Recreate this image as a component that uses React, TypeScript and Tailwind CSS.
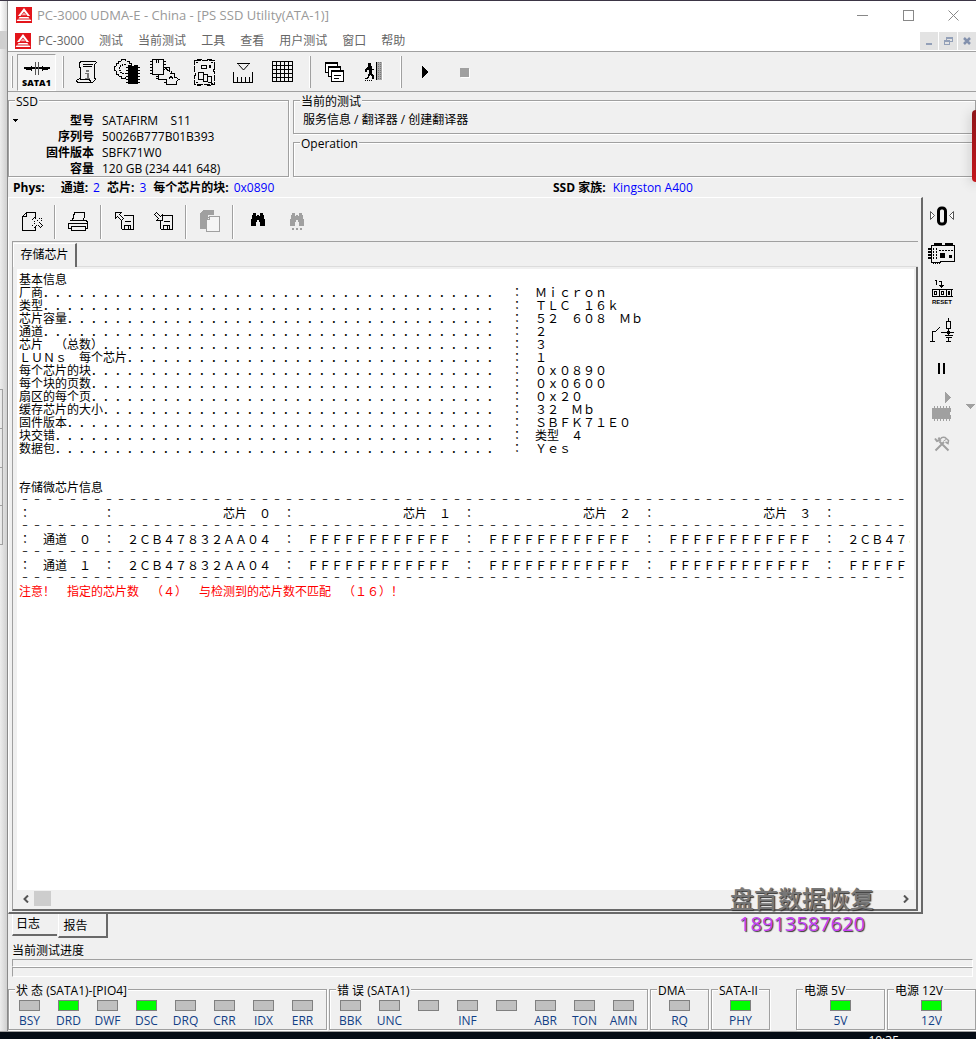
import type { ReactNode } from "react";

const UI_FONT = "font-['Open_Sans','Noto_Sans_CJK_SC',sans-serif]";

function Pix({ w, h, children, color = "#000" }: { w: number; h: number; children: ReactNode; color?: string }) {
  return (
    <svg width={w} height={h} viewBox={`0 0 ${w} ${h}`} fill="none" stroke={color} strokeWidth="1" shapeRendering="crispEdges" aria-hidden="true" className="shrink-0">
      {children}
    </svg>
  );
}

function Logo() {
  return (
    <svg width="16" height="16" viewBox="0 0 16 16" aria-hidden="true" className="shrink-0">
      <rect width="16" height="16" fill="#e3151b" />
      <path d="M8 1 14 9h-2.400L8 4.400 4.400 9H2z" fill="#fff" />
      <path d="M5.500 8.200 8 5.800l2.500 2.400z" fill="#f6b5b6" />
      <path d="M3.600 10h8.800l1.200 1.400H2.400zM1.600 12.400h12.800l1 1.600H.6z" fill="#fff" />
    </svg>
  );
}

const SataIcon = () => (
  <Pix w={28} h={13}>
    <path d="M1 6h26" strokeWidth="2" />
    <path d="M12.500 0v13M15.500 0v13" stroke="#555" />
    <path d="M3 5h5v3H3zM20 5h5v3h-5zM8 4h1v5H8zM19 4h1v5h-1z" fill="#000" stroke="none" />
  </Pix>
);

const ScrollIcon = () => (
  <Pix w={23} h={24}>
    <path d="M4.500 1.500h15l1 1-2 2v13l1 2-3 3H1.500l-1-2 1-1 3-1v-10l-1-2v-3zM4 19.500h9l2 2" />
    <path d="M7 4.500h10M7 6.500h9" />
    <path d="M10 10h3v2h-3zM9 13h4v5h1v1H9v-1h2v-4H9z" fill="#777" stroke="none" />
  </Pix>
);

const GearChipIcon = () => (
  <Pix w={28} h={28}>
    <path d="M14 3.500h2v2h2v3M12.500 3V1.500h-4V3M8 3.500H6M5.500 3v2h-2v3M3 8.500H1.500v4H3M3.500 13v3h2v2M6 18.500h2.500v2h4v-2" />
    <path d="M13 6.500H9.500v1h-2v2h-1v3h1v2h2v1H13" strokeDasharray="2 1" />
    <path d="M15 7h3v1h3V7h4v19H15z" fill="#000" stroke="none" />
    <path d="M13 9.500h2M13 12.500h2M13 15.500h2M13 18.500h2M13 21.500h2M13 24.500h2M25 9.500h2M25 12.500h2M25 15.500h2M25 18.500h2M25 21.500h2M25 24.500h2" />
  </Pix>
);

const ChipsIcon = () => (
  <Pix w={31} h={28}>
    <path d="M2.500 1.500h11v15h-11zM6.500 2v3M8.500 2v3" />
    <path d="M0 3.500h2M0 6.500h2M0 9.500h2M0 12.500h2M0 15.500h2M14 3.500h2M14 6.500h2" />
    <path d="M14 9.500h5v3M21.500 13v2M8.500 17v4.500h8M14 11.500l2-1 2 2 2 1" />
    <path d="M20 15.500h4v4M16.500 22v4.500h10v-4M24 19.500h2l3 2-3 2M6 18.500h2M6 20.500h2M14 24.500h2M19 20.500l2-2 2 2" />
  </Pix>
);

const BoardIcon = () => (
  <Pix w={24} h={29}>
    <path d="M1.500 2.500h20v8l-1 2 1 2v12h-20v-8l1-2-1-2z" strokeDasharray="6 1" />
    <path d="M4 1.500h5M14 1.500h5M4 27.500h4M14 27.500h4M8.500 7.500h5v3h-5zM16.500 7.500h1v2h-1zM5.500 14.500h5v7h-5zM10.500 16.500h4v7h-4v-2M14.500 18.500h4v6h-4" />
    <path d="M3 4.500h2M18 4.500h2M3 24.500h2M18 25.500h2" />
  </Pix>
);

const RulerIcon = () => (
  <Pix w={21} h={21}>
    <path d="M4 1.500h13M5.500 2.500l5 5.500 5-5.500" shapeRendering="auto" />
    <path d="M.5 10v10.500h19V10M4.500 15v5M8.500 15v5M12.500 15v5M16.500 15v5" />
  </Pix>
);

const GridIcon = () => (
  <Pix w={22} h={22}>
    <path d="M.5.5h20v20H.5zM4.500 0v21M8.500 0v21M12.500 0v21M16.500 0v21M0 4.500h21M0 8.500h21M0 12.500h21M0 16.500h21" />
  </Pix>
);

const CascadeIcon = () => (
  <Pix w={20} h={21}>
    <path d="M.5.5h12v10H.500z" fill="#fff" />
    <path d="M0 1h13" strokeWidth="2" />
    <path d="M3.500 4.500h12v10h-12z" fill="#fff" />
    <path d="M3 5h13" strokeWidth="2" />
    <path d="M6.500 8.500h12v11h-12z" fill="#fff" />
    <path d="M6 9h13" strokeWidth="2" />
    <path d="M9 13.500h7M9 16.500h5" />
  </Pix>
);

const ExitIcon = () => (
  <Pix w={20} h={20}>
    <path d="M4 1h3v3h1v3h2v1H8v3l2 3v3H8v-2l-2-2-2 4H1v-1h2l2-5V8H3v2H1V8l3-4z" fill="#000" stroke="none" />
    <path d="M1 18.500h8" strokeDasharray="1 1" />
    <path d="M12.500 0v18" />
    <path d="M13 0h5v18h-5z" fill="#a9a9a9" stroke="none" />
    <path d="M14.500 0v18M16.500 0v18" strokeDasharray="1 1" stroke="#777" />
    <path d="M18.500 0v18" stroke="#fff" />
  </Pix>
);

const CloseDocIcon = () => (
  <Pix w={22} h={20}>
    <path d="M13.500 14v4.500H.5v-14l4-4h9V6M4.500 1v3.500H1" />
    <path d="M12.500 5.500l3 3 3-3 2 2-3 3 3 3-2 2-3-3-3 3-2-2 3-3-3-3z" strokeDasharray="2 1" />
  </Pix>
);

const PrintIcon = () => (
  <Pix w={21} h={20}>
    <path d="M4.500 8.500l2-8h10v3l-1 5M1.500 8.500h17l1 2v6h-3M.5 10.500v6h3M1 11.500h18M3.500 14.500h14v4h-14z" />
  </Pix>
);

const Floppy = () => (
  <>
    <path d="M9 3.500h9.500v14h-11l-1-1V9M10 9.500h6M9.500 17v-3.500h6V17" />
    <path d="M13 14h1v3h-1z" fill="#000" stroke="none" />
  </>
);
const LoadIcon = () => (
  <Pix w={20} h={19}>
    <Floppy />
    <path d="M.5.5h6l-2 2 4 4-2 2-4-4-2 2z" fill="#f0f0f0" />
  </Pix>
);
const SaveIcon = () => (
  <Pix w={20} h={19}>
    <Floppy />
    <path d="M2.500.5l4 4 2-2v6h-6l2-2-4-4z" fill="#f0f0f0" />
  </Pix>
);

const CopyIcon = () => (
  <Pix w={22} h={23}>
    <path d="M3 0h11v5H8v14H0V3z" fill="#a0a0a0" stroke="none" />
    <path d="M9.500 6.500h10v15h-13v-12zM9.500 7v2.500H7" stroke="#a0a0a0" fill="#f5f5f5" />
  </Pix>
);

const Bino = ({ color, dots }: { color: string; dots?: boolean }) => (
  <Pix w={16} h={18} color={color}>
    <path d="M3 0h3v3h1V2h2v1h1V0h3v2h1v3l1 2v6h-5V9H9V7H7v2H6v4H1V7l1-2V2h1z" fill={color} stroke="none" />
    {dots && <path d="M3 15h2v2H3zM7 15h2v2H7zM11 15h2v2h-2z" fill={color} stroke="none" />}
  </Pix>
);

const ZeroIcon = () => (
  <svg width="26" height="20" viewBox="0 0 26 20" aria-hidden="true">
    <path d="M1.500 5.500v8l4-4zM24.500 5.500v8l-4-4z" fill="#fff" stroke="#555" />
    <rect x="9.500" y="2" width="7" height="16" rx="3" fill="#f0f0f0" stroke="#000" strokeWidth="3" />
  </svg>
);

const CardIcon = () => (
  <Pix w={28} h={22}>
    <path d="M3.500 2.500h23v16h-14v1h-9z" />
    <path d="M6 0h8v3H6zM17 0h8v3h-8zM0 5h3v2H0zM0 8h3v2H0zM0 11h3v2H0zM0 14h3v2H0zM12 10h5v5h-5zM21 12h3v3h-3z" fill="#000" stroke="none" />
    <path d="M11 7.500h14M5 5v12M8.500 5v12" strokeDasharray="2 1" />
    <path d="M5 19.500h8" strokeDasharray="1 1" strokeWidth="2" />
  </Pix>
);

const CounterIcon = () => (
  <Pix w={21} h={19}>
    <path d="M3 1.500h1.500V6M7 2.500h2.500v5M7.500 6l2 2 2-2M.5 10.500h20M.5 17.500h20M.5 10v8M7.500 10v8M14.500 10v8M19.500 10v8" />
    <path d="M2.500 12.500h2v3h-2zM9.500 12.500h2v3h-2zM16.500 12.500h1v3h-1z" />
  </Pix>
);

const CircuitIcon = () => (
  <Pix w={24} h={25}>
    <path d="M0 23.500h5M2.500 23v-9.500h3l4-4M11 14.500h13M18.500 0v3M16.500 3.500h4v7h-4zM18.500 11v6M15 17.500h8M16 19.500h6M18.500 20v4M16 23.500h5" />
    <path d="M17 13h3v3h-3z" fill="#000" stroke="none" />
  </Pix>
);

const ChipPlayIcon = () => (
  <Pix w={20} h={31} color="#a0a0a0">
    <path d="M13 1l6 5.500-6 5.500z" fill="#a0a0a0" stroke="none" />
    <path d="M0 17h19v4h-1v3h1v4H0z" fill="#a0a0a0" stroke="none" />
    <path d="M2.500 15v15M5.500 15v15M8.500 15v15M11.500 15v15M14.500 15v15M17.500 15v15" />
  </Pix>
);

const ToolsIcon = () => (
  <svg width="16" height="16" viewBox="0 0 16 16" fill="none" stroke="#a0a0a0" strokeWidth="2" aria-hidden="true">
    <path d="M1.500 14.500 10 6M14.500 14.500 5.500 5.500M1 2.500l2 2.500 3-1L4.500 1.500" />
    <path d="M6.500 3C7.500 1 9 1 11 1.500l3.500 3-.5 3-2.500-1.500" strokeWidth="1.500" />
    <path d="M9.500 5 12 3.500" strokeWidth="1" />
  </svg>
);

function Sep({ className = "" }: { className?: string }) {
  return (
    <div className={`flex self-stretch justify-end py-[3px] pr-1 ${className}`}>
      <div className="w-[2px] border-l border-r border-l-white border-r-[#a0a0a0]" />
    </div>
  );
}

function ToolSep({ className = "w-[7px]" }: { className?: string }) {
  return (
    <div className={`flex h-[34px] pl-[2px] ${className}`}>
      <div className="w-[2px] border-l border-r border-l-[#a0a0a0] border-r-white" />
    </div>
  );
}

function Tool({ label, children, className = "h-[36px] w-[39px]", disabled }: { label: string; children: ReactNode; className?: string; disabled?: boolean }) {
  return (
    <button type="button" aria-label={label} disabled={disabled} className={`flex shrink-0 items-center justify-center ${className}`}>
      {children}
    </button>
  );
}

function Group({ title, children, className = "" }: { title: string; children?: ReactNode; className?: string }) {
  return (
    <fieldset className={`min-w-0 border border-[#a0a0a0] shadow-[1px_1px_0_#fff,inset_1px_1px_0_#fff] ${className}`}>
      <legend className="ml-[6px] h-[14px] bg-[#f0f0f0] px-px leading-[18px] whitespace-nowrap">{title}</legend>
      {children}
    </fieldset>
  );
}

function Led({ label, on }: { label: string; on?: boolean }) {
  return (
    <div className="flex w-[39px] flex-col items-center">
      <span className={`h-[11px] w-[21px] border border-[#808080] ${on ? "bg-[#00ff00]" : "bg-[#c0c0c0]"}`} />
      <span className="h-[20px] leading-[20px] text-[#123f86]">{label}</span>
    </div>
  );
}

const full = (s: string) =>
  s.replace(/[!-~]/g, (c) => String.fromCharCode(c.charCodeAt(0) + 0xfee0)).replace(/ /g, "\u3000");

const params: [string, string][] = [
  ["厂商", "Micron"],
  ["类型", "TLC 16k"],
  ["芯片容量", "52 608 Mb"],
  ["通道", "2"],
  ["芯片 （总数）", "3"],
  ["LUNs 每个芯片", "1"],
  ["每个芯片的块", "0x0890"],
  ["每个块的页数", "0x0600"],
  ["扇区的每个页", "0x20"],
  ["缓存芯片的大小", "32 Mb"],
  ["固件版本", "SBFK71E0"],
  ["块交错", "类型 4"],
  ["数据包", "Yes"],
];

const rule = "– ".repeat(75);
const F = "FFFFFFFFFFFF";
const ID = "2CB47832AA04";
const reportLines = [
  "基本信息",
  ...params.map(([k, v]) => k.padEnd(40, ".") + " : " + v),
  "",
  "",
  "存储微芯片信息",
  rule,
  ":      :" + [0, 1, 2, 3].map((n) => `         芯片 ${n} :`).join(""),
  rule,
  `: 通道 0 : ${ID} : ${F} : ${F} : ${F} : ${ID}`,
  rule,
  `: 通道 1 : ${ID} : ${F} : ${F} : ${F} : ${F}`,
  rule,
];

/* Colons sit in the middle of their cell; rules use a dash and a space that together fill one 12px cell. */
function ReportLine({ text }: { text: string }) {
  if (text === rule) {
    return <div className="h-[13px] pl-[3px] font-['Liberation_Mono',monospace] text-[10px] leading-[13px]">{text}</div>;
  }
  return (
    <div className="h-[13px]">
      {text.split(/(:)/).map((part, i) =>
        part === ":" ? <span key={i} className="font-['Noto_Sans_CJK_TC',monospace]">：</span> : full(part),
      )}
    </div>
  );
}

const menu = ["测试", "当前测试", "工具", "查看", "用户测试", "窗口", "帮助"];
const info = [
  ["型号", "SATAFIRM\u00a0\u00a0\u00a0 S11"],
  ["序列号", "50026B777B01B393"],
  ["固件版本", "SBFK71W0"],
  ["容量", "120 GB (234 441 648)"],
];
const statusLeds: [string, boolean][] = [
  ["BSY", false], ["DRD", true], ["DWF", false], ["DSC", true],
  ["DRQ", false], ["CRR", false], ["IDX", false], ["ERR", false],
];
const errorLeds = ["BBK", "UNC", "", "INF", "", "ABR", "TON", "AMN"];

export default function App() {
  return (
    <div className={`flex min-h-screen flex-col overflow-hidden bg-[#f0f0f0] text-[12px] leading-[16px] text-black ${UI_FONT}`}>
      <div className="h-px bg-[#3b3545]" />
      <div className="flex flex-1">
        <div className="flex w-2 shrink-0 flex-col border-r border-[#8a8a8a] bg-linear-to-r from-[#ededed] to-[#d0d0d0]">
          <div className="h-[30px] bg-linear-to-r from-white to-[#dcdcdc]" />
          <div className="h-[18px] bg-[#cfcfcf]" />
          <div className="mt-[340px] flex h-[156px] w-[3px] flex-col border-y border-r border-[#a0a0a0]">
            <div className="flex-1 border-b border-[#a0a0a0]" />
            <div className="flex-1 border-b border-[#a0a0a0]" />
            <div className="flex-1 border-b border-[#a0a0a0]" />
            <div className="flex-1" />
          </div>
        </div>

        <div className="flex min-w-0 flex-1 flex-col">
          <header className="flex h-[30px] items-center bg-white pb-[2px] pl-2">
            <Logo />
            <h1 className="ml-[5px] flex-1 text-[13px] font-normal text-[#999]">PC-3000 UDMA-E - China - [PS SSD Utility(ATA-1)]</h1>
            <Tool label="最小化" className="h-[28px] w-[46px]"><Pix w={11} h={11} color="#888"><path d="M0 5.500h11" /></Pix></Tool>
            <Tool label="最大化" className="h-[28px] w-[46px]"><Pix w={11} h={11} color="#888"><path d="M.5.5h9.500v9.500H.5z" /></Pix></Tool>
            <Tool label="关闭" className="h-[28px] w-[45px]">
              <svg width="11" height="11" viewBox="0 0 11 11" stroke="#888" aria-hidden="true"><path d="M.5.5l10 10M10.500.5l-10 10" /></svg>
            </Tool>
          </header>

          <nav className="flex h-[21px] items-center gap-[15px] border-b border-[#a0a0a0] bg-white pl-[7px] text-[#666]">
            <button type="button" className="flex items-center gap-[7px]"><Logo />PC-3000</button>
            {menu.map((m) => (
              <button key={m} type="button" className="whitespace-nowrap">{m}</button>
            ))}
            <div className="ml-auto flex gap-px self-stretch pt-px">
              <Tool label="最小化子窗口" className="h-[18px] w-[18px] bg-[#e3e3e3]"><Pix w={6} h={9}><path d="M0 7h6" stroke="#93a0b8" strokeWidth="2" /></Pix></Tool>
              <Tool label="还原子窗口" className="h-[18px] w-[18px] bg-[#e3e3e3]"><Pix w={9} h={9} color="#93a0b8"><path d="M2.500 3V.5h6v4H6M2 1.500h6M.5 3.500h5v4h-5zM0 4.500h6" /></Pix></Tool>
              <Tool label="关闭子窗口" className="h-[18px] w-[18px] bg-[#e3e3e3]">
                <svg width="8" height="8" viewBox="0 0 8 8" stroke="#8391ad" strokeWidth="2.500" aria-hidden="true"><path d="M1 1l6 6M7 1l-6 6" /></svg>
              </Tool>
            </div>
          </nav>

          <div className="flex h-[40px] items-center border-b border-[#a0a0a0] pt-px">
            <Sep className="w-[9px]" />
            <button type="button" className="flex h-[37px] w-[39px] flex-col items-center gap-[2px] border border-[#a0a0a0] border-r-white border-b-white bg-[#f5f5f5] pt-[7px] text-[9px] leading-[11px] font-extrabold">
              <SataIcon />
              SATA1
            </button>
            <Sep className="w-[12px]" />
            <Tool label="信息"><ScrollIcon /></Tool>
            <Tool label="芯片设置"><GearChipIcon /></Tool>
            <Tool label="芯片"><ChipsIcon /></Tool>
            <Tool label="电路板"><BoardIcon /></Tool>
            <Tool label="测量"><RulerIcon /></Tool>
            <Tool label="表格"><GridIcon /></Tool>
            <Sep className="w-[13px]" />
            <Tool label="层叠窗口"><CascadeIcon /></Tool>
            <Tool label="退出"><ExitIcon /></Tool>
            <Sep className="w-[13px]" />
            <Tool label="开始"><Pix w={7} h={12}><path d="M0 0l7 6-7 6z" fill="#000" stroke="none" /></Pix></Tool>
            <Tool label="停止" disabled><span className="size-[9px] bg-[#a0a0a0] shadow-[1px_1px_0_#fff]" /></Tool>
          </div>

          <section className="flex h-[85px] gap-1 pt-px">
            <Group title="SSD" className="w-[281px] shrink-0">
              <div className="flex pt-[6px]">
                <button type="button" aria-label="选择硬盘" className="flex h-[14px] w-[9px] items-center justify-end">
                  <Pix w={5} h={3}><path d="M0 0h5L2.500 3z" fill="#000" stroke="none" /></Pix>
                </button>
                <dl className="grid grid-cols-[76px_auto] gap-x-2">
                  {info.map(([k, v]) => (
                    <div key={k} className="contents">
                      <dt className="text-right font-bold">{k}</dt>
                      <dd>{v}</dd>
                    </div>
                  ))}
                </dl>
              </div>
            </Group>
            <div className="flex min-w-0 flex-1 flex-col gap-px">
              <Group title="当前的测试" className="h-[41px]">
                <p className="pt-[5px] pl-[9px]">服务信息 / 翻译器 / 创建翻译器</p>
              </Group>
              <Group title="Operation" className="h-[42px]" />
            </div>
          </section>

          <div className="flex h-[20px] items-center pt-[2px] pl-[5px] whitespace-nowrap">
            <div className="flex w-[540px]">
              <b className="mr-4">Phys:</b>
              <b className="mr-[5px]">通道:</b><span className="mr-[7px] text-[#0000ff]">2</span>
              <b className="mr-[5px]">芯片:</b><span className="mr-[7px] text-[#0000ff]">3</span>
              <b className="mr-[5px]">每个芯片的块:</b><span className="text-[#0000ff]">0x0890</span>
            </div>
            <b className="mr-[7px]">SSD 家族:</b><span className="text-[#0000ff]">Kingston A400</span>
          </div>

          <div className="flex min-h-0 flex-1">
            <main className="flex min-w-0 flex-1 flex-col border-t border-r-2 border-b-2 border-l border-t-white border-r-[#696969] border-b-[#696969] border-l-white px-[3px] pb-px">
              <div className="flex h-[43px] items-center pt-[4px] pl-px">
                <Tool label="关闭报告"><CloseDocIcon /></Tool>
                <ToolSep />
                <Tool label="打印"><PrintIcon /></Tool>
                <ToolSep />
                <Tool label="载入"><LoadIcon /></Tool>
                <Tool label="保存"><SaveIcon /></Tool>
                <ToolSep className="w-2" />
                <Tool label="复制" disabled><CopyIcon /></Tool>
                <ToolSep className="w-2" />
                <Tool label="查找"><Bino color="#000" /></Tool>
                <Tool label="查找下一个" disabled><Bino color="#a0a0a0" dots /></Tool>
              </div>
              <div role="tablist" className="flex h-[26px] border-t border-l border-[#a0a0a0] pt-px">
                <button type="button" role="tab" aria-selected="true" className="w-[64px] border-t border-r-2 border-l border-t-white border-r-[#696969] border-l-white pb-[2px]">存储芯片</button>
                <div className="flex-1 border-b border-[#dcdcdc]" />
              </div>
              <div className="flex flex-1 flex-col border-r-2 border-b-2 border-l border-r-[#696969] border-b-[#696969] border-l-[#a0a0a0] pt-[2px] pr-[2px] pb-[2px] pl-1">
                <div className="flex-1 bg-white pt-[3px] pr-1 pl-[2px]">
                  <pre className="[overflow-x:clip] font-['Noto_Sans_CJK_SC',monospace] text-[12px] leading-[13px] [text-spacing-trim:space-all]">
                    {reportLines.map((l, i) => (
                      <ReportLine key={i} text={l} />
                    ))}
                    <div className="h-[13px] text-[#ff0000]">{full("注意! 指定的芯片数 （4） 与检测到的芯片数不匹配 （16）!")}</div>
                  </pre>
                </div>
                <div className="flex h-[17px] items-center justify-between">
                  <div className="flex items-center">
                    <Tool label="向左滚动" className="h-[15px] w-[17px]"><svg width="6" height="8" viewBox="0 0 6 8" fill="none" stroke="#555" strokeWidth="2" aria-hidden="true"><path d="M5 .5 1.500 4 5 7.500" /></svg></Tool>
                    <span className="h-[15px] w-[17px] bg-[#cdcdcd]" />
                  </div>
                  <Tool label="向右滚动" className="h-[15px] w-[17px]"><svg width="6" height="8" viewBox="0 0 6 8" fill="none" stroke="#555" strokeWidth="2" aria-hidden="true"><path d="M1 .5 4.500 4 1 7.500" /></svg></Tool>
                </div>
              </div>
            </main>

            <aside className="flex w-[53px] shrink-0 flex-col">
              <Tool label="归零" className="h-[38px] w-[38px]"><ZeroIcon /></Tool>
              <Tool label="板卡" className="h-[38px] w-[38px]"><CardIcon /></Tool>
              <button type="button" className="flex h-[38px] w-[38px] flex-col items-center gap-px pt-[6px] font-['Liberation_Sans',sans-serif] text-[6px] leading-[7px] font-bold">
                <CounterIcon />
                RESET
              </button>
              <Tool label="电源" className="h-[38px] w-[38px]"><CircuitIcon /></Tool>
              <Tool label="暂停" className="h-[38px] w-[38px]"><Pix w={8} h={11}><path d="M1 0v11M6 0v11" strokeWidth="2" /></Pix></Tool>
              <div className="flex items-center">
                <Tool label="运行芯片" disabled className="h-[38px] w-[38px]"><ChipPlayIcon /></Tool>
                <Tool label="更多" disabled className="h-[36px] w-[15px] pl-1"><Pix w={9} h={5}><path d="M0 0h9L4.500 5z" fill="#a0a0a0" stroke="none" /></Pix></Tool>
              </div>
              <Tool label="工具" disabled className="h-[38px] w-[38px]"><ToolsIcon /></Tool>
            </aside>
          </div>

          <div role="tablist" className="flex h-[24px] items-start pl-1">
            <button type="button" role="tab" aria-selected="false" className="h-[22px] w-[45px] border-b-2 border-l border-b-[#696969] border-l-white pr-[14px]">日志</button>
            <button type="button" role="tab" aria-selected="true" className="ml-px h-[24px] w-[50px] border-r-2 border-b-2 border-l border-r-[#696969] border-b-[#696969] border-l-white pt-[2px] pr-[14px]">报告</button>
          </div>

          <div className="flex h-[44px] flex-col pt-[5px] pr-[3px] pl-1">
            <p>当前测试进度</p>
            <div role="progressbar" aria-label="当前测试进度" className="h-2 border border-[#a0a0a0] border-r-white border-b-white" />
            <div role="progressbar" aria-label="总进度" className="h-[10px] border border-[#a0a0a0] border-r-white border-b-white" />
          </div>

          <footer className="flex h-[49px] gap-[2px] whitespace-nowrap">
            <Group title="状 态 (SATA1)-[PIO4]" className="h-[48px] w-[319px]">
              <div className="flex pt-1 pl-px">{statusLeds.map(([l, on]) => <Led key={l} label={l} on={on} />)}</div>
            </Group>
            <Group title="错 误 (SATA1)" className="h-[48px] w-[319px]">
              <div className="flex pt-1 pl-px">{errorLeds.map((l, i) => <Led key={i} label={l} />)}</div>
            </Group>
            <Group title="DMA" className="h-[48px] w-[59px]">
              <div className="flex justify-center pt-1"><Led label="RQ" /></div>
            </Group>
            <Group title="SATA-II" className="h-[48px] w-[59px]">
              <div className="flex justify-center pt-1"><Led label="PHY" on /></div>
            </Group>
            <Group title="电源 5V" className="ml-auto h-[48px] w-[89px]">
              <div className="flex justify-center pt-1"><Led label="5V" on /></div>
            </Group>
            <Group title="电源 12V" className="h-[48px] w-[89px]">
              <div className="flex justify-center pt-1"><Led label="12V" on /></div>
            </Group>
          </footer>
        </div>
      </div>
      <div className="flex h-[8px] justify-end overflow-hidden border-t border-[#a0a0a0] bg-[#040b14] pt-[3px] pr-[77px] text-[12px] leading-[12px] text-white">10:35</div>

      <div className="pointer-events-none absolute right-[102px] bottom-[103px] text-center">
        <div className="text-[24px] leading-[26px] font-medium text-[#777] [text-shadow:1px_1px_1px_#333]">盘首数据恢复</div>
        <div className="text-[20px] leading-[24px] font-medium text-[#c840f5] [text-shadow:1px_1px_1px_#333]">18913587620</div>
      </div>
      <div className="absolute top-[110px] right-0 h-[72px] w-1 rounded-l-sm bg-linear-to-b from-[#8f1519] to-[#c4151a] shadow-[0_2px_12px_rgba(0,0,0,0.3)]" />
    </div>
  );
}
